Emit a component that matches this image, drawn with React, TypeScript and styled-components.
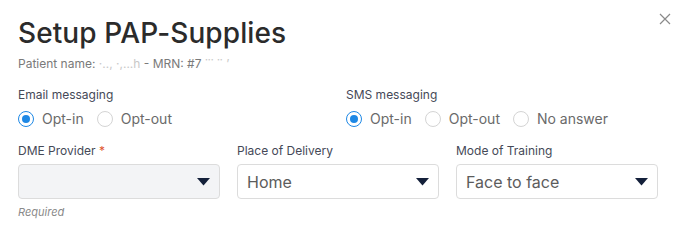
import styled, { createGlobalStyle } from 'styled-components';

const GlobalStyle = createGlobalStyle`
  html, body {
    margin: 0;
    padding: 0;
    background: #ffffff;
  }
  body {
    font-family: Inter, "Noto Sans", "Liberation Sans", sans-serif;
  }
`;

type Option = { label: string; checked?: boolean };

const emailOptions: Option[] = [{ label: 'Opt-in', checked: true }, { label: 'Opt-out' }];
const smsOptions: Option[] = [
  { label: 'Opt-in', checked: true },
  { label: 'Opt-out' },
  { label: 'No answer' },
];

const App = () => {
  return (
    <>
      <GlobalStyle />
      <Modal>
        <Header>
          <Title>Setup PAP-Supplies</Title>
          <CloseButton aria-label="Close">
            <svg width="12" height="12" viewBox="0 0 12 12">
              <path d="M1 1L11 11M11 1L1 11" stroke="#8a8a8a" strokeWidth="1.2" />
            </svg>
          </CloseButton>
        </Header>
        <Subtitle>
          Patient name: <Faded>·‥, ·,‥.h</Faded> - MRN: #7<Faded> ˙˙˙ ˙˙ ’</Faded>
        </Subtitle>

        <RadioRow>
          <RadioGroup>
            <Label>Email messaging</Label>
            <Options>
              {emailOptions.map(o => (
                <RadioItem key={o.label}>
                  <RadioCircle $checked={!!o.checked} />
                  {o.label}
                </RadioItem>
              ))}
            </Options>
          </RadioGroup>
          <RadioGroup>
            <Label>SMS messaging</Label>
            <Options>
              {smsOptions.map(o => (
                <RadioItem key={o.label}>
                  <RadioCircle $checked={!!o.checked} />
                  {o.label}
                </RadioItem>
              ))}
            </Options>
          </RadioGroup>
        </RadioRow>

        <SelectRow>
          <Field>
            <Label>
              DME Provider <Star>*</Star>
            </Label>
            <Select $empty>
              <span />
              <Caret />
            </Select>
            <Hint>Required</Hint>
          </Field>
          <Field>
            <Label>Place of Delivery</Label>
            <Select>
              <span>Home</span>
              <Caret />
            </Select>
          </Field>
          <Field>
            <Label>Mode of Training</Label>
            <Select>
              <span>Face to face</span>
              <Caret />
            </Select>
          </Field>
        </SelectRow>
      </Modal>
    </>
  );
};

export default App;

const Caret = () => (
  <svg width="13" height="8" viewBox="0 0 13 8">
    <path d="M0 0H13L6.5 7.5Z" fill="#14203a" />
  </svg>
);

const Modal = styled.div`
  width: 677px;
  height: 229px;
  box-sizing: border-box;
  padding: 15px 20px 0 18px;
  background: #fff;
`;

const Header = styled.div`
  display: flex;
  justify-content: space-between;
  align-items: flex-start;
`;

const Title = styled.h1`
  margin: 0;
  font-size: 28px;
  line-height: 36px;
  font-weight: 500;
  color: #2b2b2b;
  letter-spacing: 0.1px;
`;

const CloseButton = styled.button`
  border: none;
  background: none;
  padding: 0;
  margin: -6px -18px 0 0;
  width: 20px;
  height: 20px;
  display: flex;
  align-items: center;
  justify-content: center;
  cursor: pointer;
`;

const Subtitle = styled.div`
  margin-top: 5px;
  font-size: 12px;
  line-height: 15px;
  color: #7a7a7a;
`;

const Faded = styled.span`
  color: #c8c8c8;
`;

const RadioRow = styled.div`
  display: grid;
  grid-template-columns: 328px 1fr;
  margin-top: 16px;
`;

const RadioGroup = styled.div`
  display: flex;
  flex-direction: column;
`;

const Label = styled.div`
  font-size: 12px;
  line-height: 16px;
  color: #454957;
`;

const Star = styled.span`
  color: #e0552d;
`;

const Options = styled.div`
  display: flex;
  gap: 13px;
  margin-top: 7px;
`;

const RadioItem = styled.label`
  display: flex;
  align-items: center;
  gap: 8px;
  font-size: 14px;
  line-height: 18px;
  color: #6a6a6a;
`;

const RadioCircle = styled.span<{ $checked: boolean }>`
  width: 16px;
  height: 16px;
  box-sizing: border-box;
  border-radius: 50%;
  border: 1px solid ${p => (p.$checked ? '#1e88e5' : '#d4d4d4')};
  display: flex;
  align-items: center;
  justify-content: center;
  &::after {
    content: '';
    width: 8px;
    height: 8px;
    border-radius: 50%;
    background: ${p => (p.$checked ? '#1e88e5' : 'transparent')};
  }
`;

const SelectRow = styled.div`
  display: grid;
  grid-template-columns: repeat(3, 202px);
  column-gap: 17px;
  margin-top: 15px;
`;

const Field = styled.div`
  display: flex;
  flex-direction: column;
`;

const Select = styled.div<{ $empty?: boolean }>`
  margin-top: 5px;
  height: 35px;
  box-sizing: border-box;
  border: 1px solid #dcdcdc;
  border-radius: 4px;
  background: ${p => (p.$empty ? '#f3f4f6' : '#fff')};
  display: flex;
  align-items: center;
  justify-content: space-between;
  padding: 0 9px 0 9px;
  font-size: 16px;
  color: #5c5c5c;
`;

const Hint = styled.div`
  margin-top: 6px;
  font-size: 11px;
  font-style: italic;
  color: #8a8a8a;
`;
